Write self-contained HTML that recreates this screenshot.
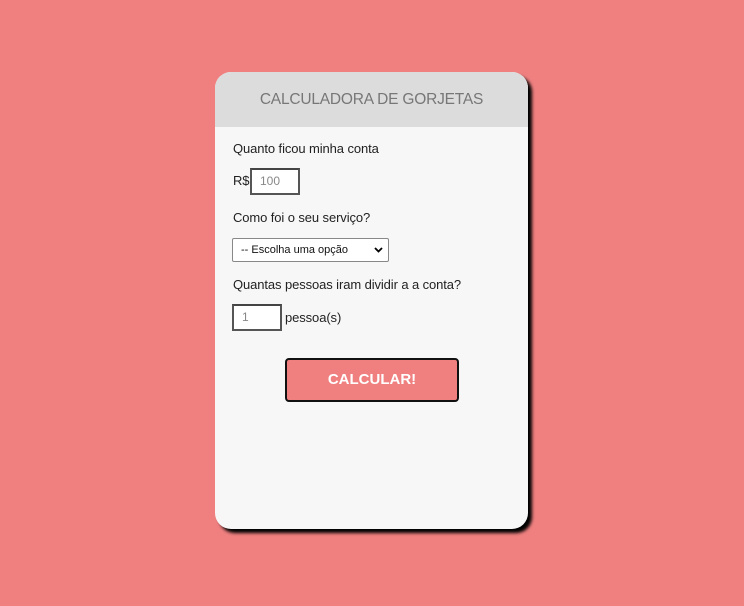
<!DOCTYPE html>
<html><head><style>
body{margin:0;width:744px;height:606px;background:#f08080;font-family:"Liberation Sans",sans-serif;position:relative;overflow:hidden}
.card{position:absolute;left:215px;top:72px;width:313px;height:457px;background:#f7f7f7;border-radius:16px;box-shadow:4px 4px 3px #000;overflow:hidden}
.hd{height:55px;background:#dcdcdc;color:#777;font-size:15.5px;letter-spacing:-0.2px;text-align:center;line-height:56px}
.t{position:absolute;left:18px;font-size:13px;letter-spacing:-0.1px;color:#222}
.in{position:absolute;border:2px solid #555;border-top-color:#444;background:#fff;color:#888;font-size:12px;box-sizing:border-box;padding-left:8px}
.sel{position:absolute;left:17px;top:166px;width:157px;height:24px;border:1px solid #888;border-radius:2px;background:#fff;font-size:11px;line-height:22px;padding-left:8px;box-sizing:border-box;color:#111}
.btn{position:absolute;left:70px;top:286px;width:174px;height:44px;box-sizing:border-box;border:2px solid #111;border-radius:4px;background:#f08080;color:#fff;font-weight:bold;font-size:15px;text-align:center;line-height:40px}
</style></head><body>
<div class="card">
<div class="hd">CALCULADORA DE GORJETAS</div>
<div class="t" style="top:69px">Quanto ficou minha conta</div>
<div class="t" style="top:101px">R$</div>
<div class="in" style="left:35px;top:96px;width:50px;height:27px;line-height:23px">100</div>
<div class="t" style="top:138px">Como foi o seu serviço?</div>
<div class="sel">-- Escolha uma opção<svg style="position:absolute;right:5px;top:8px" width="9" height="6" viewBox="0 0 9 6"><path d="M1 1l3.5 3.5L8 1" stroke="#000" stroke-width="1.8" fill="none"/></svg></div>
<div class="t" style="top:205px">Quantas pessoas iram dividir a a conta?</div>
<div class="in" style="left:17px;top:232px;width:50px;height:27px;line-height:23px">1</div>
<div class="t" style="top:238px;left:70px">pessoa(s)</div>
<div class="btn">CALCULAR!</div>
</div>
</body></html>
